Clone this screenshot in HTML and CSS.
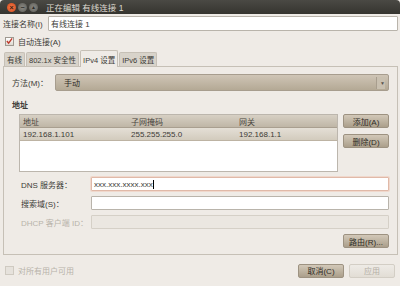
FILE: index.html
```html
<!DOCTYPE html>
<html lang="zh-CN">
<head>
    <meta charset="UTF-8">
    <title>正在编辑 有线连接 1</title>
    <link rel="stylesheet" href="styles.css">
</head>
<body>
    <div class="window">
        <div class="titlebar">
            <div class="wm-buttons">
                <span class="wm-btn close">&times;</span>
                <span class="wm-btn">&minus;</span>
                <span class="wm-btn">&#9650;</span>
            </div>
            <span class="title">正在编辑 有线连接 1</span>
        </div>
        <div class="body">
            <div class="name-row">
                <label>连接名称(I)</label>
                <div class="entry">有线连接 1</div>
            </div>
            <div class="check-row">
                <span class="check on">
                    <svg width="8" height="8" viewBox="0 0 8 8"><path d="M1 4 L3 6.5 L7 1" fill="none" stroke="#c0392b" stroke-width="1.6"/></svg>
                </span>
                <span>自动连接(A)</span>
            </div>
            <div class="tabs">
                <span class="tab">有线</span>
                <span class="tab">802.1x 安全性</span>
                <span class="tab active">IPv4 设置</span>
                <span class="tab">IPv6 设置</span>
            </div>
            <div class="panel">
                <div class="method-row">
                    <label>方法(M)：</label>
                    <div class="combo">
                        <span>手动</span>
                        <span class="arrow">&#9660;</span>
                    </div>
                </div>
                <div class="section-title">地址</div>
                <div class="addr-row">
                    <div class="table">
                        <div class="thead">
                            <span>地址</span>
                            <span>子网掩码</span>
                            <span>网关</span>
                        </div>
                        <div class="trow selected">
                            <span>192.168.1.101</span>
                            <span>255.255.255.0</span>
                            <span>192.168.1.1</span>
                        </div>
                    </div>
                    <div class="side-buttons">
                        <button class="btn">添加(A)</button>
                        <button class="btn">删除(D)</button>
                    </div>
                </div>
                <div class="form">
                    <div class="field">
                        <label>DNS 服务器：</label>
                        <div class="entry focus">xxx.xxx.xxxx.xxx<span class="caret"></span></div>
                    </div>
                    <div class="field">
                        <label>搜索域(S)：</label>
                        <div class="entry"></div>
                    </div>
                    <div class="field disabled">
                        <label>DHCP 客户端 ID：</label>
                        <div class="entry"></div>
                    </div>
                </div>
                <div class="route-row">
                    <button class="btn">路由(R)...</button>
                </div>
            </div>
            <div class="footer">
                <div class="check-row disabled">
                    <span class="check"></span>
                    <span>对所有用户可用</span>
                </div>
                <div class="actions">
                    <button class="btn">取消(C)</button>
                    <button class="btn disabled">应用</button>
                </div>
            </div>
        </div>
    </div>
</body>
</html>
```

FILE: styles.css
```css
body {
    margin: 0;
    font-family: 'Liberation Sans', 'Noto Sans CJK SC', sans-serif;
    font-size: 8px;
    color: #3c3b37;
    background: #efebe7;
}

.window {
    width: 400px;
    height: 286px;
    display: flex;
    flex-direction: column;
    background: #efebe6;
    overflow: hidden;
}

.titlebar {
    height: 15px;
    background: linear-gradient(#4a4944, #35342f);
    display: flex;
    align-items: center;
    padding-left: 7px;
    border-radius: 4px 4px 0 0;
}

.wm-buttons {
    display: flex;
    gap: 2px;
    margin-right: 8px;
}

.wm-btn {
    width: 9px;
    height: 9px;
    border-radius: 50%;
    background: radial-gradient(#8b8a84, #5d5c57);
    color: #2e2d29;
    font-size: 7px;
    line-height: 9px;
    text-align: center;
    font-weight: bold;
}

.wm-btn:nth-child(3) {
    font-size: 5px;
}

.wm-btn.close {
    background: radial-gradient(#f47a4a, #d24a1c);
    color: #3a1a0c;
}

.title {
    color: #dfdbd2;
    font-size: 8.5px;
}

.body {
    flex: 1;
    display: flex;
    flex-direction: column;
    padding: 2px 2px 0 3px;
}

.name-row {
    display: flex;
    align-items: center;
    height: 15px;
}

.name-row label {
    width: 45px;
}

.entry {
    flex: 1;
    height: 13px;
    background: #fff;
    border: 1px solid #b9b4ab;
    border-radius: 1px;
    display: flex;
    align-items: center;
    padding-left: 2px;
}

.check-row {
    display: flex;
    align-items: center;
    gap: 4px;
    height: 14px;
    margin: 3px 0 2px 2px;
}

.check {
    width: 7px;
    height: 7px;
    border: 1px solid #9f9990;
    background: linear-gradient(#fff, #ddd8cf);
    display: flex;
    align-items: center;
    justify-content: center;
}

.tabs {
    display: flex;
    align-items: flex-end;
    height: 16px;
    padding-left: 1px;
    gap: 1px;
}

.tab {
    height: 13px;
    padding: 0 2px;
    font-size: 7.5px;
    background: #d8d3ca;
    border: 1px solid #c6c0b6;
    border-bottom: none;
    border-radius: 2px 2px 0 0;
    display: flex;
    align-items: center;
}

.tab.active {
    height: 16px;
    background: #efebe6;
    position: relative;
    top: 1px;
}

.panel {
    height: 189px;
    border: 1px solid #c6c0b6;
    padding: 7px 8px 0 8px;
    display: flex;
    flex-direction: column;
    box-sizing: border-box;
}

.method-row {
    display: flex;
    align-items: center;
    height: 17px;
}

.method-row label {
    width: 43px;
}

.combo {
    flex: 1;
    height: 15px;
    border: 1px solid #a79d8e;
    border-radius: 2px;
    background: linear-gradient(#cfc5b6, #b4a995);
    display: flex;
    align-items: center;
    justify-content: space-between;
    padding: 0 3px 0 8px;
    color: #2e2b26;
}

.arrow {
    font-size: 5px;
    color: #5a554c;
    background: #c9c0b0;
    border-left: 1px solid #a89e8e;
    padding: 3px 0 3px 3px;
}

.section-title {
    font-weight: bold;
    margin: 8px 0 5px 0;
    height: 10px;
}

.addr-row {
    display: flex;
    gap: 5px;
    padding-left: 7px;
}

.table {
    width: 321px;
    height: 58px;
    background: #fff;
    border: 1px solid #bcb6ad;
    box-sizing: border-box;
}

.thead, .trow {
    display: grid;
    grid-template-columns: 108px 108px 1fr;
    height: 12px;
    align-items: center;
    padding-left: 3px;
}

.thead {
    background: linear-gradient(#d7d0c4, #bfb6a6);
    border-bottom: 1px solid #a99f90;
    color: #4a463f;
}

.trow.selected {
    background: linear-gradient(#e4dfd6, #d2cbbd);
    border-bottom: 1px solid #bdb3a3;
}

.side-buttons {
    display: flex;
    flex-direction: column;
    gap: 6px;
}

.btn {
    width: 46px;
    height: 14px;
    padding: 0;
    font-family: inherit;
    font-size: 8px;
    color: #2e2b26;
    border: 1px solid #9d9281;
    border-radius: 2px;
    background: linear-gradient(#d2c8b8, #ab9f8b);
}

.btn.disabled {
    color: #b5b0a7;
    background: linear-gradient(#eeebe6, #e2ddd5);
    border-color: #d3cec5;
}

.form {
    display: flex;
    flex-direction: column;
    gap: 5px;
    margin-top: 5px;
    padding-left: 9px;
}

.field {
    display: flex;
    align-items: center;
}

.field label {
    width: 70px;
}

.field .entry {
    height: 12px;
}

.entry.focus {
    border-color: #e0b9a8;
    box-shadow: 0 0 0 1px #f0d8cc;
}

.caret {
    width: 1px;
    height: 9px;
    background: #000;
}

.field.disabled label {
    color: #b8b3aa;
}

.field.disabled .entry {
    background: #ebe7e1;
    border-color: #d5d0c7;
}

.route-row {
    display: flex;
    justify-content: flex-end;
    margin-top: 5px;
}

.footer {
    display: flex;
    justify-content: space-between;
    align-items: center;
    height: 31px;
    padding-right: 3px;
}

.check-row.disabled {
    color: #b8b3aa;
    margin: 0 0 0 2px;
}

.check-row.disabled .check {
    border-color: #cfcac1;
    background: #e6e2dc;
}

.actions {
    display: flex;
    gap: 5px;
}
```
